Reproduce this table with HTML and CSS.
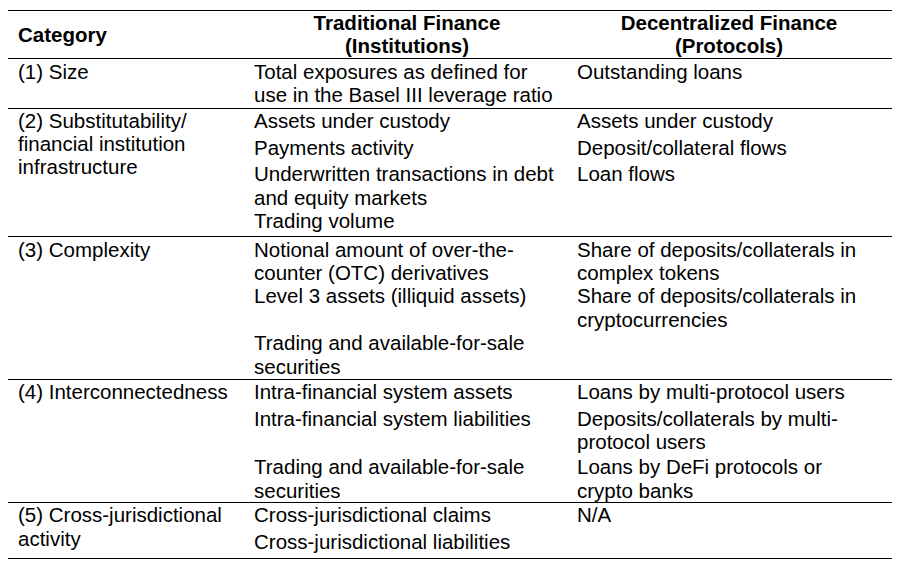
FILE: index.html
```html
<!DOCTYPE html>
<html lang="en">
<head>
<meta charset="utf-8">
<title>Traditional vs Decentralized Finance</title>
<link rel="stylesheet" href="styles.css">
</head>
<body>
<div class="table">
  <div class="row head">
    <div class="cell cat">Category</div>
    <div class="cell c2">Traditional Finance<br>(Institutions)</div>
    <div class="cell c3">Decentralized Finance<br>(Protocols)</div>
  </div>

  <div class="row r1">
    <div class="cell cat">(1) Size</div>
    <div class="cell c2">Total exposures as defined for use in the Basel III leverage ratio</div>
    <div class="cell c3">Outstanding loans</div>
  </div>

  <div class="row r2">
    <div class="cell cat span4">(2) Substitutability/ financial institution infrastructure</div>
    <div class="cell c2">Assets under custody</div>
    <div class="cell c3">Assets under custody</div>
    <div class="cell c2 g">Payments activity</div>
    <div class="cell c3 g">Deposit/collateral flows</div>
    <div class="cell c2 g">Underwritten transactions in debt and equity markets</div>
    <div class="cell c3 g">Loan flows</div>
    <div class="cell c2">Trading volume</div>
    <div class="cell c3"></div>
  </div>

  <div class="row r3">
    <div class="cell cat span3">(3) Complexity</div>
    <div class="cell c2">Notional amount of over-the-counter (OTC) derivatives</div>
    <div class="cell c3">Share of deposits/collaterals in complex tokens</div>
    <div class="cell c2">Level 3 assets (illiquid assets)</div>
    <div class="cell c3">Share of deposits/collaterals in cryptocurrencies</div>
    <div class="cell c2">Trading and available-for-sale securities</div>
    <div class="cell c3"></div>
  </div>

  <div class="row r4">
    <div class="cell cat span3">(4) Interconnectedness</div>
    <div class="cell c2">Intra-financial system assets</div>
    <div class="cell c3">Loans by multi-protocol users</div>
    <div class="cell c2 g">Intra-financial system liabilities</div>
    <div class="cell c3 g">Deposits/collaterals by multi-protocol users</div>
    <div class="cell c2 gs">Trading and available-for-sale securities</div>
    <div class="cell c3 gs">Loans by DeFi protocols or<br>crypto banks</div>
  </div>

  <div class="row r5">
    <div class="cell cat span2">(5) Cross-jurisdictional activity</div>
    <div class="cell c2">Cross-jurisdictional claims</div>
    <div class="cell c3">N/A</div>
    <div class="cell c2 g">Cross-jurisdictional liabilities</div>
    <div class="cell c3 g"></div>
  </div>
</div>
</body>
</html>
```

FILE: styles.css
```css
html, body {
  margin: 0;
  padding: 0;
  background: #ffffff;
}

body {
  font-family: "Liberation Sans", Arial, sans-serif;
  font-size: 20.5px;
  line-height: 23.4px;
  color: #000000;
}

.table {
  margin: 10px 0 0 8px;
  width: 884px;
  border-top: 1px solid #000;
}

.row {
  display: grid;
  grid-template-columns: 238px 323px 323px;
  border-bottom: 1px solid #000;
}

.cell {
  min-width: 0;
}

.cat {
  grid-column: 1;
  padding-left: 10px;
  padding-right: 8px;
}

.c2 {
  grid-column: 2;
  padding-left: 8px;
  padding-right: 9px;
}

.c3 {
  grid-column: 3;
  padding-left: 8px;
  padding-right: 11px;
}

.span2 { grid-row: 1 / span 2; }
.span3 { grid-row: 1 / span 3; }
.span4 { grid-row: 1 / span 4; }

.g {
  padding-top: 3.5px;
}

.gs {
  padding-top: 1.5px;
}

.head {
  font-weight: bold;
}

.head .cat {
  align-self: center;
}

.head .c2,
.head .c3 {
  text-align: center;
}

.r1 {
  padding-top: 1px;
  padding-bottom: 1px;
}

.r2 {
  padding-bottom: 3px;
}

.r3 {
  padding-top: 1px;
  padding-bottom: 1px;
}

.r4 {
  padding-bottom: 0;
}

.r5 {
  padding-top: 0;
  padding-bottom: 4.5px;
}
```
